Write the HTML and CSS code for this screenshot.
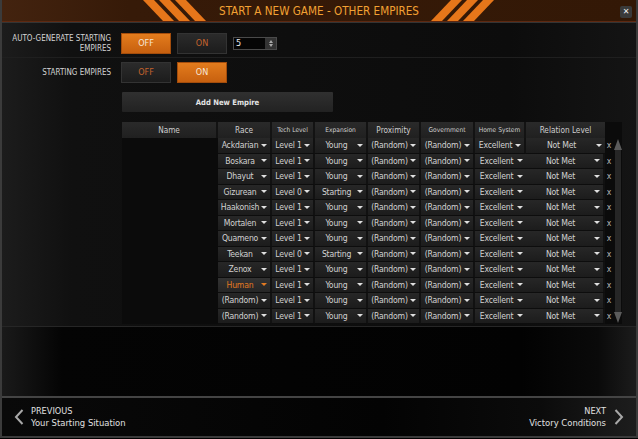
FILE: index.html
```html
<!DOCTYPE html>
<html lang="en">
<head>
    <meta charset="UTF-8">
    <title>Start a New Game - Other Empires</title>
    <link rel="stylesheet" href="styles.css">
</head>
<body>
<div class="window">
    <div class="titlebar">
        <svg class="stripes" width="64" height="21" viewBox="0 0 64 21">
            <polygon points="0,0 11,0 31,21 20,21" />
            <polygon points="16,0 27,0 47,21 36,21" />
            <polygon points="32,0 43,0 63,21 52,21" />
        </svg>
        <h1>START A NEW GAME - OTHER EMPIRES</h1>
        <svg class="stripes" width="64" height="21" viewBox="0 0 64 21">
            <polygon points="20,0 31,0 11,21 0,21" />
            <polygon points="36,0 47,0 27,21 16,21" />
            <polygon points="52,0 63,0 43,21 32,21" />
        </svg>
        <span class="close">&#x2715;</span>
    </div>

    <div class="setup">
        <div class="option first">
            <label class="opt-label">AUTO-GENERATE STARTING<br>EMPIRES</label>
            <div class="toggle">
                <span class="btn active">OFF</span>
                <span class="btn">ON</span>
            </div>
            <div class="spin">
                <span class="spin-value">5</span>
                <span class="spin-arrows"><i class="up"></i><i class="down"></i></span>
            </div>
        </div>
        <div class="option">
            <label class="opt-label">STARTING EMPIRES</label>
            <div class="toggle">
                <span class="btn">OFF</span>
                <span class="btn active">ON</span>
            </div>
        </div>

        <button class="add-empire">Add New Empire</button>

        <div class="empires">
            <div class="th">Name</div>
            <div class="th">Race</div>
            <div class="th small">Tech Level</div>
            <div class="th small">Expansion</div>
            <div class="th">Proximity</div>
            <div class="th small">Government</div>
            <div class="th small">Home System</div>
            <div class="th">Relation Level</div>
            <div class="th-gap"></div>

            <div class="name"></div>
            <div class="sel"><span>Ackdarian</span><i></i></div><div class="sel"><span>Level 1</span><i></i></div><div class="sel"><span>Young</span><i></i></div><div class="sel"><span>(Random)</span><i></i></div><div class="sel"><span>(Random)</span><i></i></div><div class="sel"><span>Excellent</span><i></i></div><div class="sel"><span>Not Met</span><i></i></div><div class="del">x</div>
            <div class="scrollbar"><i class="up"></i><span class="track"></span><i class="down"></i></div>

            <div class="name"></div>
            <div class="sel"><span>Boskara</span><i></i></div><div class="sel"><span>Level 1</span><i></i></div><div class="sel"><span>Young</span><i></i></div><div class="sel"><span>(Random)</span><i></i></div><div class="sel"><span>(Random)</span><i></i></div><div class="sel"><span>Excellent</span><i></i></div><div class="sel"><span>Not Met</span><i></i></div><div class="del">x</div>

            <div class="name"></div>
            <div class="sel"><span>Dhayut</span><i></i></div><div class="sel"><span>Level 1</span><i></i></div><div class="sel"><span>Young</span><i></i></div><div class="sel"><span>(Random)</span><i></i></div><div class="sel"><span>(Random)</span><i></i></div><div class="sel"><span>Excellent</span><i></i></div><div class="sel"><span>Not Met</span><i></i></div><div class="del">x</div>

            <div class="name"></div>
            <div class="sel"><span>Gizurean</span><i></i></div><div class="sel"><span>Level 0</span><i></i></div><div class="sel"><span>Starting</span><i></i></div><div class="sel"><span>(Random)</span><i></i></div><div class="sel"><span>(Random)</span><i></i></div><div class="sel"><span>Excellent</span><i></i></div><div class="sel"><span>Not Met</span><i></i></div><div class="del">x</div>

            <div class="name"></div>
            <div class="sel"><span>Haakonish</span><i></i></div><div class="sel"><span>Level 1</span><i></i></div><div class="sel"><span>Young</span><i></i></div><div class="sel"><span>(Random)</span><i></i></div><div class="sel"><span>(Random)</span><i></i></div><div class="sel"><span>Excellent</span><i></i></div><div class="sel"><span>Not Met</span><i></i></div><div class="del">x</div>

            <div class="name"></div>
            <div class="sel"><span>Mortalen</span><i></i></div><div class="sel"><span>Level 1</span><i></i></div><div class="sel"><span>Young</span><i></i></div><div class="sel"><span>(Random)</span><i></i></div><div class="sel"><span>(Random)</span><i></i></div><div class="sel"><span>Excellent</span><i></i></div><div class="sel"><span>Not Met</span><i></i></div><div class="del">x</div>

            <div class="name"></div>
            <div class="sel"><span>Quameno</span><i></i></div><div class="sel"><span>Level 1</span><i></i></div><div class="sel"><span>Young</span><i></i></div><div class="sel"><span>(Random)</span><i></i></div><div class="sel"><span>(Random)</span><i></i></div><div class="sel"><span>Excellent</span><i></i></div><div class="sel"><span>Not Met</span><i></i></div><div class="del">x</div>

            <div class="name"></div>
            <div class="sel"><span>Teekan</span><i></i></div><div class="sel"><span>Level 0</span><i></i></div><div class="sel"><span>Starting</span><i></i></div><div class="sel"><span>(Random)</span><i></i></div><div class="sel"><span>(Random)</span><i></i></div><div class="sel"><span>Excellent</span><i></i></div><div class="sel"><span>Not Met</span><i></i></div><div class="del">x</div>

            <div class="name"></div>
            <div class="sel"><span>Zenox</span><i></i></div><div class="sel"><span>Level 1</span><i></i></div><div class="sel"><span>Young</span><i></i></div><div class="sel"><span>(Random)</span><i></i></div><div class="sel"><span>(Random)</span><i></i></div><div class="sel"><span>Excellent</span><i></i></div><div class="sel"><span>Not Met</span><i></i></div><div class="del">x</div>

            <div class="name"></div>
            <div class="sel player"><span>Human</span><i></i></div><div class="sel"><span>Level 1</span><i></i></div><div class="sel"><span>Young</span><i></i></div><div class="sel"><span>(Random)</span><i></i></div><div class="sel"><span>(Random)</span><i></i></div><div class="sel"><span>Excellent</span><i></i></div><div class="sel"><span>Not Met</span><i></i></div><div class="del">x</div>

            <div class="name"></div>
            <div class="sel"><span>(Random)</span><i></i></div><div class="sel"><span>Level 1</span><i></i></div><div class="sel"><span>Young</span><i></i></div><div class="sel"><span>(Random)</span><i></i></div><div class="sel"><span>(Random)</span><i></i></div><div class="sel"><span>Excellent</span><i></i></div><div class="sel"><span>Not Met</span><i></i></div><div class="del">x</div>

            <div class="name"></div>
            <div class="sel"><span>(Random)</span><i></i></div><div class="sel"><span>Level 1</span><i></i></div><div class="sel"><span>Young</span><i></i></div><div class="sel"><span>(Random)</span><i></i></div><div class="sel"><span>(Random)</span><i></i></div><div class="sel"><span>Excellent</span><i></i></div><div class="sel"><span>Not Met</span><i></i></div><div class="del">x</div>
        </div>
    </div>

    <div class="preview"></div>

    <div class="footer">
        <a class="nav prev" href="">
            <svg width="10" height="16" viewBox="0 0 10 16"><polyline points="8.5,1 2,8 8.5,15" /></svg>
            <span><b>PREVIOUS</b><br>Your Starting Situation</span>
        </a>
        <a class="nav next" href="">
            <span><b>NEXT</b><br>Victory Conditions</span>
            <svg width="10" height="16" viewBox="0 0 10 16"><polyline points="1.5,1 8,8 1.5,15" /></svg>
        </a>
    </div>
</div>
</body>
</html>
```

FILE: styles.css
```css
* {
    box-sizing: border-box;
}

body {
    margin: 0;
    background: #000;
    font-family: "DejaVu Sans Condensed", "Liberation Sans Narrow", Roboto, sans-serif;
    color: #cfcfcf;
}

.window {
    width: 638px;
    height: 438px;
    display: flex;
    flex-direction: column;
    border: 2px solid #3b3b3b;
    border-top: 0;
    background: #000;
    position: relative;
}

/* title bar */
.titlebar {
    height: 22px;
    flex: none;
    display: flex;
    justify-content: center;
    align-items: flex-start;
    gap: 12px;
    background: linear-gradient(90deg, #43230f 0%, #361a08 20%, #331806 100%);
    border-bottom: 1px solid #5e2810;
}

.titlebar h1 {
    margin: 0;
    font-size: 11.6px;
    font-weight: normal;
    line-height: 22px;
    color: #f2a133;
    white-space: nowrap;
}

.stripes polygon {
    fill: #e6761a;
}

.close {
    position: absolute;
    top: 6px;
    right: 4px;
    width: 12px;
    height: 12px;
    border-radius: 2px;
    background: #3a3a3a;
    color: #eee;
    font-family: "DejaVu Sans", sans-serif;
    font-size: 8px;
    font-weight: bold;
    line-height: 12px;
    text-align: center;
}

/* options + table */
.setup {
    height: 304px;
    flex: none;
    border-top: 1px solid #343434;
    background: linear-gradient(90deg, #1c1c1c 0%, #101010 70px, #0c0c0c 80%, #141414 100%);
}

.option {
    display: flex;
    align-items: center;
    padding: 4px 0 4px 0;
}

.option.first {
    padding: 10px 0 3px 0;
    border-bottom: 1px solid #1f1f1f;
}

.opt-label {
    width: 109px;
    margin-right: 10px;
    text-align: right;
    font-size: 8px;
    line-height: 10px;
    color: #d4d4d4;
}

.toggle {
    display: flex;
    gap: 6px;
}

.btn {
    width: 50px;
    height: 21px;
    line-height: 19px;
    text-align: center;
    font-size: 9px;
    color: #c3622c;
    background: linear-gradient(#2b2b2b, #1c1c1c);
    border: 1px solid #333;
}

.btn.active {
    color: #f6e6d6;
    background: linear-gradient(#e37c1d, #c7600f);
    border-color: #a44d0c;
}

.spin {
    display: flex;
    margin-left: 6px;
    height: 13px;
    width: 44px;
    border: 1px solid #4a4a4a;
    background: #050505;
}

.spin-value {
    flex: 1;
    font-size: 9px;
    line-height: 11px;
    padding-left: 2px;
    color: #eee;
}

.spin-arrows {
    width: 11px;
    background: #333;
    display: flex;
    flex-direction: column;
    align-items: center;
    justify-content: center;
    gap: 1px;
}

.spin-arrows i {
    border-left: 2px solid transparent;
    border-right: 2px solid transparent;
}

.spin-arrows .up {
    border-bottom: 3px solid #aaa;
}

.spin-arrows .down {
    border-top: 3px solid #aaa;
}

.add-empire {
    display: block;
    margin: 5px 0 0 120px;
    width: 211px;
    height: 20px;
    border: 0;
    border-radius: 1px;
    background: linear-gradient(#303030, #222);
    color: #e4e4e4;
    font-family: inherit;
    font-size: 7.6px;
    font-weight: bold;
}

.empires {
    display: grid;
    grid-template-columns: 96px 54px 43px 53px 53px 54px 51px 79px 8px 9px;
    grid-template-rows: 16px repeat(12, 15.5px);
    margin: 10px 0 0 120px;
    width: 500px;
    background: #0b0b0b;
}

.th {
    display: flex;
    align-items: center;
    justify-content: center;
    font-size: 8.2px;
    color: #cfcfcf;
    background: linear-gradient(#2a2a2a, #202020);
    border-right: 2px solid #131313;
    white-space: nowrap;
}

.th.small {
    font-size: 6.6px;
}

.th:nth-child(8) {
    border-right: 0;
}

.th-gap {
    grid-column: span 2;
}

.sel {
    display: flex;
    align-items: center;
    padding: 0 3px 0 1px;
    font-size: 8.6px;
    letter-spacing: -0.2px;
    color: #d2d2d2;
    background: linear-gradient(#272727, #1c1c1c);
    border-right: 2px solid #111;
    border-bottom: 1px solid #0d0d0d;
    white-space: nowrap;
}

.sel span {
    flex: 1;
    text-align: center;
}

.sel i {
    width: 0;
    height: 0;
    border-left: 3px solid transparent;
    border-right: 3px solid transparent;
    border-top: 3px solid #e0e0e0;
}

.sel:nth-child(9n+8) {
    border-right: 0;
}

.sel.player {
    background: linear-gradient(#333, #262626);
    color: #e27a22;
}

.sel.player i {
    border-top-color: #e27a22;
}

.del {
    font-size: 8.6px;
    line-height: 14px;
    text-align: center;
    color: #b5b5b5;
}

.scrollbar {
    grid-column: 10;
    grid-row: 2 / span 12;
    display: flex;
    flex-direction: column;
    align-items: center;
    padding: 1px 0;
}

.scrollbar i {
    width: 0;
    height: 0;
    border-left: 4px solid transparent;
    border-right: 4px solid transparent;
}

.scrollbar .up {
    border-bottom: 11px solid #5b5b5b;
}

.scrollbar .down {
    border-top: 11px solid #5b5b5b;
}

.scrollbar .track {
    flex: 1;
    width: 6px;
    background: #262626;
}

/* empty galaxy preview */
.preview {
    flex: 1;
    border-top: 1px solid #262626;
    background: linear-gradient(90deg, #1a1a1a 0%, #040404 60px, #020202 82%, #0a0a0a 94%, #1c1c1c 100%);
}

/* navigation */
.footer {
    height: 40px;
    flex: none;
    display: flex;
    justify-content: space-between;
    align-items: center;
    padding: 0 12px;
    border-top: 2px solid #444;
    background: linear-gradient(90deg, #090909 0%, #030303 60%, #0b0b0b 85%, #1d1d1d 100%);
}

.nav {
    display: flex;
    align-items: center;
    gap: 7px;
    text-decoration: none;
    color: #e0e0e0;
    font-size: 9.4px;
    line-height: 12px;
}

.nav b {
    font-weight: normal;
    font-size: 9.1px;
}

.nav.next {
    text-align: right;
    gap: 8px;
}

.nav polyline {
    fill: none;
    stroke: #a8a8a8;
    stroke-width: 2;
}
```
